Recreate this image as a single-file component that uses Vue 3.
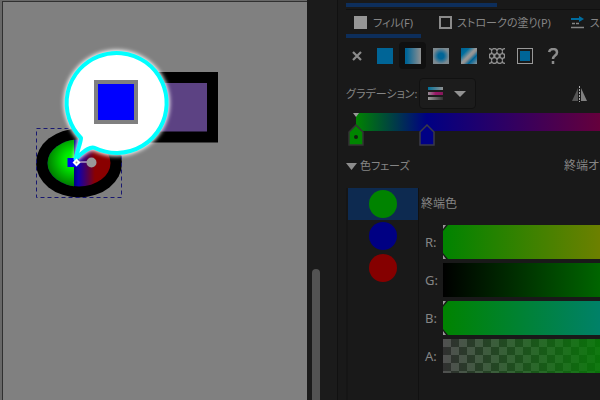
<script setup>
import { ref } from 'vue'

const paint = ref('linear')
const paints = [
  { id: 'none', label: 'なし' },
  { id: 'flat', label: '単一色' },
  { id: 'linear', label: '線形グラデーション' },
  { id: 'radial', label: '放射グラデーション' },
  { id: 'mesh', label: 'メッシュ' },
  { id: 'pattern', label: 'パターン' },
  { id: 'swatch', label: 'スウォッチ' },
  { id: 'unset', label: '未設定' }
]
const stops = ref([
  { color: '#008300' },
  { color: '#000083' },
  { color: '#850000' }
])
const selected = ref(0)
const channels = ref([
  { id: 'r', name: 'R:', value: 0, marked: true },
  { id: 'g', name: 'G:', value: 255, marked: false },
  { id: 'b', name: 'B:', value: 0, marked: true },
  { id: 'a', name: 'A:', value: 255, marked: false }
])
const holes = [3.5, 12.5].flatMap(y => [0, 5.3, 10.7, 16].map(x => ({ x, y, r: 2.2 })))
  .concat([-1, 8, 17].flatMap(y => [2.7, 8, 13.3].map(x => ({ x, y, r: 1.7 }))))
</script>

<template>
  <div class="app">
    <main class="canvas">
      <svg class="drawing" width="304" height="398" viewBox="3 2 304 398" role="img" aria-label="キャンバス">
        <defs>
          <radialGradient id="greenGlow" gradientUnits="userSpaceOnUse" cx="73" cy="160" r="25">
            <stop offset="0" stop-color="#00ff00" />
            <stop offset="0.35" stop-color="#00e800" />
            <stop offset="1" stop-color="#008200" />
          </radialGradient>
          <linearGradient id="blueRed" gradientUnits="userSpaceOnUse" x1="74" y1="0" x2="95" y2="0">
            <stop offset="0" stop-color="#000080" />
            <stop offset="0.2" stop-color="#0c00b0" />
            <stop offset="1" stop-color="#8a0000" />
          </linearGradient>
          <clipPath id="leftHalf"><rect x="40" y="130" width="34" height="70" /></clipPath>
          <filter id="glow" x="-20%" y="-20%" width="140%" height="140%"><feGaussianBlur stdDeviation="2" /></filter>
        </defs>
        <rect x="125" y="77.500" width="87.500" height="59.500" fill="#5c4283" stroke="#000" stroke-width="11" />
        <ellipse cx="79" cy="163" rx="43" ry="34.500" fill="#000" />
        <ellipse cx="79" cy="163" rx="31.500" ry="23.500" fill="url(#blueRed)" />
        <ellipse cx="79" cy="163" rx="31.500" ry="23.500" fill="url(#greenGlow)" clip-path="url(#leftHalf)" />
        <rect x="36.500" y="128.500" width="85" height="69" fill="none" stroke="#181870" stroke-dasharray="4 3" />
        <path id="halo" d="M81 138A50 50 0 1 1 95 148C91 146 86 149 77 157C78 149 81 142 81 138Z" fill="#fff" stroke="#fff" stroke-width="6" filter="url(#glow)" />
        <path d="M76 162H91" stroke="#9078b0" stroke-width="2" />
        <rect x="67.500" y="158" width="11" height="9" fill="#0000f0" />
        <circle cx="91.500" cy="162.500" r="5" fill="#999" />
        <path d="M81 138A50 50 0 1 1 95 148C91 146 86 149 75.500 159C78 149 81 142 81 138Z" fill="#fff" stroke="#00ffff" stroke-width="4" stroke-linejoin="round" />
        <path d="M76.500 158.500L80.500 162.500L76.500 166.500L72.500 162.500Z" fill="#fff" />
        <circle cx="76.500" cy="162.500" r="1" fill="#999" />
        <rect x="96" y="82" width="40" height="40" fill="#0000ff" stroke="#808080" stroke-width="4" />
      </svg>
    </main>

    <div class="gutter"><div class="scroll-thumb"></div></div>

    <aside class="panel">
      <div class="dock-tab"></div>
      <nav class="tabs">
        <button class="tab active" type="button">
          <svg width="13" height="13"><rect width="13" height="13" fill="#969696" /></svg>
          <span>フィル(F)</span>
        </button>
        <button class="tab" type="button">
          <svg width="13" height="13"><rect x="1" y="1" width="11" height="11" fill="none" stroke="#8b8b8b" stroke-width="2" /></svg>
          <span>ストロークの塗り(P)</span>
        </button>
        <button class="tab" type="button">
          <svg width="14" height="13">
            <path d="M0 3H9" stroke="#006da0" stroke-width="2" /><path d="M8 0L13 3L8 6Z" fill="#006da0" />
            <path d="M1 7.500H4M5 7.500H8M0 11.500H13" stroke="#858585" stroke-width="1.500" />
          </svg>
          <span>ストロークのスタイル</span>
        </button>
      </nav>

      <div class="paints">
        <button v-for="p in paints" :key="p.id" class="paint" :class="{ on: paint === p.id }" type="button" :aria-label="p.label" @click="paint = p.id">
          <svg width="16" height="16" viewBox="0 0 16 16">
            <defs>
              <linearGradient id="pl"><stop offset="0.1" stop-color="#006597" /><stop offset="1" stop-color="#909090" /></linearGradient>
              <radialGradient id="pr"><stop offset="0.35" stop-color="#006597" /><stop offset="1" stop-color="#7c8990" /></radialGradient>
              <linearGradient id="pm" x1="0" y1="0" x2="1" y2="1">
                <stop offset="0" stop-color="#006090" /><stop offset="0.25" stop-color="#006f9f" /><stop offset="0.48" stop-color="#999" />
                <stop offset="0.56" stop-color="#909090" /><stop offset="0.72" stop-color="#006597" /><stop offset="1" stop-color="#8c9499" />
              </linearGradient>
            </defs>
            <path v-if="p.id === 'none'" d="M4 4L12 12M12 4L4 12" stroke="#8c8c8c" stroke-width="2.200" />
            <rect v-else-if="p.id === 'flat'" width="16" height="16" fill="#006597" />
            <rect v-else-if="p.id === 'linear'" width="16" height="16" fill="url(#pl)" />
            <rect v-else-if="p.id === 'radial'" width="16" height="16" fill="url(#pr)" />
            <rect v-else-if="p.id === 'mesh'" width="16" height="16" fill="url(#pm)" />
            <g v-else-if="p.id === 'pattern'">
              <rect width="16" height="16" fill="#909090" />
              <circle v-for="(h, i) in holes" :key="i" :cx="h.x" :cy="h.y" :r="h.r" fill="#191919" />
            </g>
            <g v-else-if="p.id === 'swatch'">
              <rect x="0.500" y="0.500" width="15" height="15" fill="none" stroke="#999" /><rect x="3" y="3" width="10" height="10" fill="#006597" />
            </g>
            <g v-else fill="none" stroke="#8c8c8c" stroke-width="2.500">
              <path d="M4 4C5 0 12 0 12 4.500C12 7.500 8 7.500 8 11" /><path d="M8 13V16" />
            </g>
          </svg>
        </button>
      </div>

      <div class="gradient-row">
        <span id="grad-label" class="grad-label">グラデーション:</span>
        <button class="picker" type="button" aria-labelledby="grad-label">
          <svg width="38" height="14" viewBox="0 0 38 14">
            <defs>
              <linearGradient id="g1"><stop offset="0" stop-color="#007099" /><stop offset="1" stop-color="#929292" /></linearGradient>
              <linearGradient id="g2"><stop offset="0" stop-color="#969096" /><stop offset="0.5" stop-color="#9b1868" /><stop offset="1" stop-color="#85175a" /></linearGradient>
              <linearGradient id="g3"><stop offset="0" stop-color="#999" /><stop offset="1" stop-color="#333" /></linearGradient>
            </defs>
            <rect width="15" height="3" fill="url(#g1)" /><rect y="5" width="15" height="3" fill="url(#g2)" /><rect y="10" width="15" height="3" fill="url(#g3)" />
            <path d="M26 4H38L32 10Z" fill="#929292" />
          </svg>
        </button>
        <button class="flip" type="button" aria-label="反転">
          <svg width="16" height="16" viewBox="0 0 16 16">
            <path d="M6 2V15H0Z" fill="#555" /><path d="M9 2V15H15Z" fill="#808080" />
            <path d="M7.500 0V16" stroke="#aaa" stroke-dasharray="2 1" />
          </svg>
        </button>
      </div>

      <div class="editor">
        <div class="ramp"></div>
        <svg class="mark" width="6" height="4"><path d="M0 0H6L3 4Z" fill="#999" /></svg>
        <button class="handle first" type="button" aria-label="始点">
          <svg width="16" height="22" viewBox="0 0 16 22"><path d="M8 1L15 8V21H1V8Z" fill="#008500" stroke="#333" stroke-width="1.500" /><circle cx="8" cy="13" r="2" fill="#102010" /></svg>
        </button>
        <button class="handle second" type="button" aria-label="中間点">
          <svg width="16" height="22" viewBox="0 0 16 22"><path d="M8 1L15 8V21H1V8Z" fill="#000085" stroke="#3a3a48" stroke-width="1.500" /></svg>
        </button>
      </div>

      <div class="section">
        <button class="disclose" type="button">
          <svg width="11" height="7"><path d="M0 0H11L5.500 7Z" fill="#8c8c8c" /></svg>
          <span>色フェーズ</span>
        </button>
        <span class="offset">終端オフセット:</span>
      </div>

      <div class="body">
        <div class="stops">
          <button v-for="(s, i) in stops" :key="i" class="stop" :class="{ chosen: selected === i }" type="button" :aria-label="`色フェーズ ${i + 1}`" @click="selected = i">
            <span class="dot" :style="{ background: s.color }"></span>
          </button>
        </div>
        <div class="color">
          <div class="color-title">終端色</div>
          <div v-for="c in channels" :key="c.id" class="channel">
            <label :for="c.id">{{ c.name }}</label>
            <div class="track" :class="c.id">
              <input :id="c.id" v-model="c.value" type="range" min="0" max="255" />
              <svg v-if="c.marked" class="knob" width="6" height="34">
                <path d="M0 0H5L0 6ZM0 34H5L0 28Z" fill="#181818" /><path d="M0 0H3L0 4ZM0 34H3L0 30Z" fill="#999" />
              </svg>
            </div>
          </div>
        </div>
      </div>
    </aside>
  </div>
</template>

<style>
body {
  background: #191919;
  overflow: hidden;
}
</style>

<style scoped>
.app {
  display: grid;
  grid-template-columns: minmax(0, 307fr) 31px minmax(0, 262fr);
  min-height: 100vh;
  color: #858585;
  font: 11px/18px "Noto Sans", "Noto Sans CJK JP", sans-serif;
  font-feature-settings: "palt";
  white-space: nowrap;
}
button {
  display: flex;
  align-items: center;
  margin: 0;
  padding: 0;
  border: 0;
  background: none;
  color: inherit;
  font: inherit;
  font-feature-settings: inherit;
}
svg {
  display: block;
  flex: none;
}
.canvas {
  box-sizing: border-box;
  overflow: hidden;
  border-top: 1px solid #303030;
  border-left: 1px solid #303030;
  margin-top: 1px;
  margin-left: 2px;
  box-shadow: 0 0 0 2px #686868;
  background: #808080;
}
.gutter {
  display: flex;
  position: relative;
  padding: 269px 17px 0 5px;
  border-right: 1px solid #111;
  background: #1b1b1b;
}
.scroll-thumb {
  flex: 1;
  border-radius: 4px 4px 0 0;
  background: #535353;
}
.panel {
  display: flex;
  flex-direction: column;
  overflow: hidden;
  padding-left: 8px;
  background: #191919;
}
.dock-tab {
  flex: none;
  height: 9px;
  border-bottom: 1px solid #101010;
  background: linear-gradient(#0d2e5b, #0d2e5b) 0 3px / 151px 4px no-repeat;
}
.tabs {
  display: flex;
  flex: none;
  gap: 10px;
}
.tab {
  gap: 6px;
  height: 28px;
  padding: 0 8px;
  border-bottom: 4px solid transparent;
}
.tab span {
  padding-top: 2px;
}
.tab + .tab {
  gap: 5px;
  padding-right: 2px;
}
.tab.active {
  border-bottom-color: #0d2e5b;
}
.paints {
  display: flex;
  flex: none;
  gap: 1px;
  padding-top: 4px;
  margin-left: -3px;
}
.paint {
  justify-content: center;
  width: 27px;
  height: 27px;
  border-radius: 4px;
}
.paint.on {
  background: #101010;
}
.gradient-row {
  display: flex;
  flex: none;
  align-items: center;
  gap: 2px;
  margin-top: 9px;
}
.picker {
  height: 31px;
  padding: 0 10px 0 9px;
  border-radius: 4px;
  outline: 1px solid #111;
  outline-offset: -1px;
  background: #1c1c1c;
}
.flip {
  margin-left: auto;
  margin-right: 12px;
}
.editor {
  position: relative;
  flex: none;
  height: 44px;
  padding: 4px 0 0 10px;
  box-sizing: border-box;
  margin-bottom: 4px;
}
.ramp {
  height: 18px;
  background: linear-gradient(90deg, #008300, #000083 29%, #2c0065 60%, #65003c);
}
.mark {
  position: absolute;
  top: 4px;
  left: 7px;
}
.handle {
  position: absolute;
  top: 15px;
}
.handle.first {
  left: 2px;
}
.handle.second {
  left: 73px;
}
.section {
  display: flex;
  flex: none;
  justify-content: space-between;
}
.disclose {
  gap: 3px;
}
.offset {
  width: 36px;
  overflow: hidden;
  font-size: 12px;
}
.body {
  display: flex;
  flex: 1;
  margin-top: 13px;
}
.stops {
  width: 70px;
  border-left: 2px solid #151515;
  border-right: 1px solid #111;
}
.stop {
  justify-content: center;
  width: 100%;
  height: 32px;
}
.stop.chosen {
  background: #0d2a50;
}
.dot {
  width: 28px;
  height: 28px;
  border-radius: 50%;
}
.color {
  flex: 1;
  min-width: 0;
  padding-left: 2px;
}
.color-title {
  height: 37px;
  font-size: 12px;
  line-height: 32px;
}
.channel {
  display: flex;
  align-items: center;
  height: 34px;
  margin-bottom: 4px;
  padding-left: 4px;
  font-size: 13px;
}
.channel label {
  width: 18px;
}
.track {
  position: relative;
  flex: 1;
  min-width: 0;
}
.track input {
  display: block;
  width: 100%;
  height: 34px;
  margin: 0;
  appearance: none;
  background: none;
}
.track input::-webkit-slider-thumb {
  appearance: none;
  width: 1px;
  height: 34px;
  background: transparent;
}
.knob {
  position: absolute;
  top: 0;
  left: 0;
  pointer-events: none;
}
.r {
  background: linear-gradient(90deg, #008300, #6c8000);
}
.g {
  background: linear-gradient(90deg, #000, #006500);
}
.b {
  background: linear-gradient(90deg, #008300, #008168);
}
.a {
  background:
    linear-gradient(90deg, rgba(0, 131, 0, 0), rgba(0, 131, 0, 0.8)),
    repeating-conic-gradient(#303030 0 25%, #505050 0 50%) 0 0 / 16px 16px;
}
</style>
